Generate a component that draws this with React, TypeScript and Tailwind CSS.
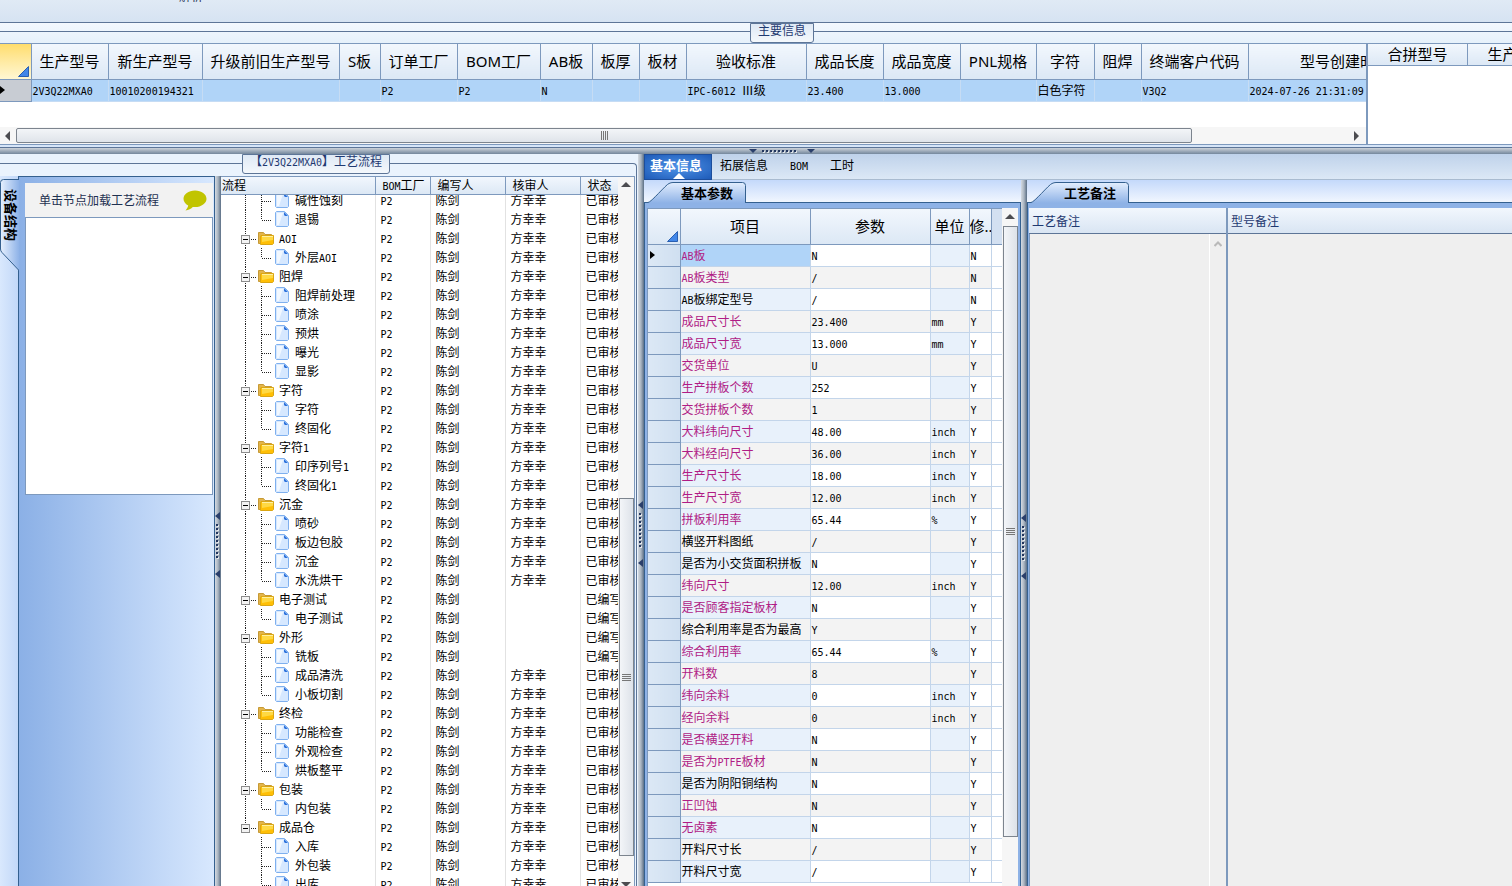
import { Fragment, useState } from 'react';

const SONG = 'font-["Noto_Sans_CJK_SC",sans-serif] text-xs';
const YAHEI = 'font-["Noto_Sans","Noto_Sans_CJK_SC",sans-serif] text-[15px] font-normal';

const mainColumns = [
  { title: '生产型号', width: 77, value: '2V3Q22MXA0' },
  { title: '新生产型号', width: 94, value: '10010200194321' },
  { title: '升级前旧生产型号', width: 137, value: '' },
  { title: 'S板', width: 41, value: '' },
  { title: '订单工厂', width: 77, value: 'P2' },
  { title: 'BOM工厂', width: 83, value: 'P2' },
  { title: 'AB板', width: 52, value: 'N' },
  { title: '板厚', width: 47, value: '' },
  { title: '板材', width: 47, value: '' },
  { title: '验收标准', width: 120, value: 'IPC-6012 Ⅲ级' },
  { title: '成品长度', width: 77, value: '23.400' },
  { title: '成品宽度', width: 77, value: '13.000' },
  { title: 'PNL规格', width: 76, value: '' },
  { title: '字符', width: 58, value: '白色字符' },
  { title: '阻焊', width: 47, value: '' },
  { title: '终端客户代码', width: 107, value: 'V3Q2' },
  { title: '型号创建时间', width: 194, value: '2024-07-26 21:31:09' },
];

type Group = { name: string; hidden?: boolean; written?: boolean; items: { name: string; written?: boolean }[] };

const groups: Group[] = [
  { name: '外层蚀刻', hidden: true, items: [{ name: '碱性蚀刻' }, { name: '退锡' }] },
  { name: 'AOI', items: [{ name: '外层AOI' }] },
  {
    name: '阻焊',
    items: [{ name: '阻焊前处理' }, { name: '喷涂' }, { name: '预烘' }, { name: '曝光' }, { name: '显影' }],
  },
  { name: '字符', items: [{ name: '字符' }, { name: '终固化' }] },
  { name: '字符1', items: [{ name: '印序列号1' }, { name: '终固化1' }] },
  { name: '沉金', items: [{ name: '喷砂' }, { name: '板边包胶' }, { name: '沉金' }, { name: '水洗烘干' }] },
  { name: '电子测试', written: true, items: [{ name: '电子测试', written: true }] },
  {
    name: '外形',
    written: true,
    items: [{ name: '铣板', written: true }, { name: '成品清洗' }, { name: '小板切割' }],
  },
  { name: '终检', items: [{ name: '功能检查' }, { name: '外观检查' }, { name: '烘板整平' }] },
  { name: '包装', items: [{ name: '内包装' }] },
  { name: '成品仓', items: [{ name: '入库' }, { name: '外包装' }, { name: '出库' }] },
];

// name, value, unit, editable, highlighted
const params: [string, string, string, string, boolean][] = [
  ['AB板', 'N', '', 'N', true],
  ['AB板类型', '/', '', 'N', true],
  ['AB板绑定型号', '/', '', 'N', false],
  ['成品尺寸长', '23.400', 'mm', 'Y', true],
  ['成品尺寸宽', '13.000', 'mm', 'Y', true],
  ['交货单位', 'U', '', 'Y', true],
  ['生产拼板个数', '252', '', 'Y', true],
  ['交货拼板个数', '1', '', 'Y', true],
  ['大料纬向尺寸', '48.00', 'inch', 'Y', true],
  ['大料经向尺寸', '36.00', 'inch', 'Y', true],
  ['生产尺寸长', '18.00', 'inch', 'Y', true],
  ['生产尺寸宽', '12.00', 'inch', 'Y', true],
  ['拼板利用率', '65.44', '%', 'Y', true],
  ['横竖开料图纸', '/', '', 'Y', false],
  ['是否为小交货面积拼板', 'N', '', 'Y', false],
  ['纬向尺寸', '12.00', 'inch', 'Y', true],
  ['是否顾客指定板材', 'N', '', 'Y', true],
  ['综合利用率是否为最高', 'Y', '', 'Y', false],
  ['综合利用率', '65.44', '%', 'Y', true],
  ['开料数', '8', '', 'Y', true],
  ['纬向余料', '0', 'inch', 'Y', true],
  ['经向余料', '0', 'inch', 'Y', true],
  ['是否横竖开料', 'N', '', 'Y', true],
  ['是否为PTFE板材', 'N', '', 'Y', true],
  ['是否为阴阳铜结构', 'N', '', 'Y', false],
  ['正凹蚀', 'N', '', 'Y', true],
  ['无卤素', 'N', '', 'Y', true],
  ['开料尺寸长', '/', '', 'Y', false],
  ['开料尺寸宽', '/', '', 'Y', false],
];

// Latin runs take a half-width monospaced face beside the full-width characters
function Text({ children }: { children: string }) {
  return (
    <>
      {children.split(/([\x20-\x7e]+)/).map((part, i) =>
        i % 2 ? (
          <span key={i} className='font-["DejaVu_Sans_Mono",monospace] text-[10px] leading-none'>{part}</span>
        ) : (
          <Fragment key={i}>{part}</Fragment>
        )
      )}
    </>
  );
}

function Corner() {
  return (
    <svg width="11" height="11" className="mb-[2px] ml-auto mr-[2px] block">
      <path d="M10.5 0.5V10.5H0.5Z" fill="#4287e8" stroke="#2a5fb0" />
    </svg>
  );
}

function RowMarker() {
  return (
    <svg width="5" height="8" className="block">
      <path d="M0 0L5 4L0 8Z" fill="#000" />
    </svg>
  );
}

function Arrow({ dir }: { dir: 'up' | 'down' | 'left' | 'right' }) {
  const d = {
    up: 'M0 7L5 2L10 7Z',
    down: 'M0 2L5 7L10 2Z',
    left: 'M7 0L2 5L7 10Z',
    right: 'M3 0L8 5L3 10Z',
  }[dir];
  return (
    <svg width="10" height="10" className="block shrink-0">
      <path d={d} fill="#4c4c50" />
    </svg>
  );
}

function VerticalGrip() {
  return (
    <svg width="6" height="66" viewBox="0 0 6 66" className="block">
      <path d="M5 0V8L0 4ZM5 58V66L0 62Z" fill="#2a3f6b" />
      <path d="M3 13V48" stroke="#fff" strokeOpacity="0.7" strokeWidth="2" strokeDasharray="2 2" />
      <path d="M2 12V47" stroke="#22365f" strokeWidth="2" strokeDasharray="2 2" />
    </svg>
  );
}

function Splitter() {
  return (
    <div className="flex w-[6px] shrink-0 items-center overflow-hidden bg-linear-to-r from-[#d5dbe2] via-[#a9b4c0] to-[#5b6f86]">
      <VerticalGrip />
    </div>
  );
}

function VerticalThumb({ className }: { className: string }) {
  return (
    <div className={`flex flex-col items-center justify-center gap-px border border-[#7c848e] bg-linear-to-r from-[#f3f5f8] to-[#dde2e9] ${className}`}>
      <span className="h-px w-[9px] bg-[#777]" />
      <span className="h-px w-[9px] bg-[#777]" />
      <span className="h-px w-[9px] bg-[#777]" />
      <span className="h-px w-[9px] bg-[#777]" />
    </div>
  );
}

function FolderIcon() {
  return (
    <svg width="16" height="14" viewBox="0 0 16 14" className="block shrink-0">
      <path d="M0.5 12.5V1.5H5.5L7 3.5H13.5V12.5Z" fill="#e3b54a" stroke="#c79a35" />
      <path d="M3 4.500H15.500V12.500L14.500 13.500H2.500V6Z" fill="#ffbf05" stroke="#dba613" />
      <path d="M4 5.500H15" stroke="#fff0a0" />
      <path d="M4 6H15V9L4 11Z" fill="#ffd943" />
    </svg>
  );
}

function FileIcon() {
  return (
    <svg width="14" height="16" viewBox="0 0 14 16" className="block shrink-0">
      <path d="M1.5 0.5H9.5L13.5 4.5V14.5L12.5 15.5H1.5L0.5 14.5V1.5Z" fill="#d6e8ff" stroke="#7fb0ee" />
      <path d="M2 2H8L4 14H2Z" fill="#f2f8ff" />
      <path d="M9 1L13 5H10L9 4Z" fill="#2e73dc" />
    </svg>
  );
}

function CommentIcon() {
  return (
    <svg width="24" height="21" viewBox="0 0 24 21" className="block">
      <path d="M12 0.5C5.5 0.5 0.5 4.3 0.5 8.8C0.5 11.6 2.3 14 5.2 15.5C5 17.3 3.8 19 2.5 20.4C5.5 20.2 8.3 18.7 9.8 17C10.5 17.1 11.3 17.1 12 17.1C18.5 17.1 23.5 13.3 23.5 8.8C23.5 4.3 18.5 0.5 12 0.5Z" fill="#c1c400" />
    </svg>
  );
}

function Caption({ children }: { children: string }) {
  return (
    <span className={`${SONG} relative block h-[20px] rounded-b-[3px] border border-[#5d7597] bg-linear-to-b from-[#dfe9f5] to-[#f4f8fc] px-[7px] leading-[12px] text-[#1f3970]`}>
      <Text>{children}</Text>
    </span>
  );
}

function SlantTab({ children }: { children: string }) {
  return (
    <div className="flex h-[23px] shrink-0 items-end border-b border-[#34608f] bg-linear-to-b from-[#c4d9fb] to-[#f1f6fe] pl-1">
      <button
        type="button"
        className='relative -mb-px h-[21px] w-[98px] pl-[33px] text-left font-["Noto_Sans_CJK_SC",sans-serif] text-[13px] leading-[18px] font-bold text-black'
      >
        <svg width="98" height="21" viewBox="0 0 98 21" className="absolute inset-0">
          <defs>
            <linearGradient id="slant" x1="0" y1="0" x2="0" y2="1">
              <stop offset="0" stopColor="#e3eefe" />
              <stop offset="1" stopColor="#8eb2e6" />
            </linearGradient>
          </defs>
          <path d="M0 20.5C3 20.5 18 2.5 21 1.5Q23 0.5 25 0.5H94.5Q97.5 0.5 97.5 3.5V21H0Z" fill="url(#slant)" />
          <path d="M0 20.5C3 20.5 18 2.5 21 1.5Q23 0.5 25 0.5H94.5Q97.5 0.5 97.5 3.5V21" fill="none" stroke="#34608f" />
        </svg>
        <span className="relative">{children}</span>
      </button>
    </div>
  );
}

function MainInfo() {
  return (
    <section className="shrink-0">
      <div className="relative flex h-[20px] justify-center bg-linear-to-b from-[#f3f8fe] to-[#e6f1fb]">
        <span className="absolute inset-x-0 top-[8px] h-px bg-[#5d7597]" />
        <Caption>主要信息</Caption>
      </div>
      <div className="flex h-[102px] border-y border-[#7d99bd] bg-white">
        <div className="flex min-w-0 flex-1 flex-col overflow-hidden">
          <table className="w-[1442px] shrink-0 table-fixed border-collapse">
            <colgroup>
              <col className="w-[31px]" />
              {mainColumns.map((c) => (
                <col key={c.title} style={{ width: c.width }} />
              ))}
            </colgroup>
            <thead>
              <tr className="h-[35px]">
                <th className="border-r border-b border-[#7d99bd] bg-linear-to-b from-[#ffdd6b] to-[#fff7d2] p-0 align-bottom">
                  <Corner />
                </th>
                {mainColumns.map((c) => (
                  <th key={c.title} className={`${YAHEI} border-r border-b border-[#7d99bd] bg-linear-to-b from-[#f2f7fd] to-[#dce8f5] p-0 leading-[20px] whitespace-nowrap`}>
                    {c.title}
                  </th>
                ))}
              </tr>
            </thead>
            <tbody>
              <tr className="h-[22px] bg-[#b0d4f8]">
                <td className="border-r border-b border-[#7d99bd] bg-[#c8ccd3] p-0">
                  <RowMarker />
                </td>
                {mainColumns.map((c) => (
                  <td key={c.title} className={`${SONG} border-r border-b border-[#c6dcf4] p-0 pl-px leading-[16px] whitespace-nowrap`}>
                    <Text>{c.value}</Text>
                  </td>
                ))}
              </tr>
            </tbody>
          </table>
          <div className="mt-auto flex h-[17px] items-center bg-[#f6f6f6] pl-[3px]">
            <Arrow dir="left" />
            <div className="ml-[3px] flex h-[15px] w-[1176px] items-center justify-center gap-px rounded-xs border border-[#7c848e] bg-linear-to-b from-[#f3f5f8] to-[#dfe4ea]">
              <span className="h-[9px] w-px bg-[#777]" />
              <span className="h-[9px] w-px bg-[#777]" />
              <span className="h-[9px] w-px bg-[#777]" />
              <span className="h-[9px] w-px bg-[#777]" />
            </div>
            <span className="mr-[5px] ml-auto">
              <Arrow dir="right" />
            </span>
          </div>
        </div>
        <div className="w-[198px] shrink-0 overflow-hidden border-l-2 border-[#7d99bd]">
          <table className="w-[200px] table-fixed border-collapse">
            <thead>
              <tr className="h-[21px]">
                {['合拼型号', '生产型号'].map((t) => (
                  <th key={t} className={`${YAHEI} border-r border-b border-[#7d99bd] bg-linear-to-b from-[#f2f7fd] to-[#dce8f5] p-0 leading-[20px]`}>
                    {t}
                  </th>
                ))}
              </tr>
            </thead>
          </table>
        </div>
      </div>
    </section>
  );
}

function DevicePanel() {
  return (
    <div className="flex w-[215px] shrink-0">
      <div className="w-[18px] shrink-0 bg-linear-to-r from-[#d9e8fd] to-[#c2d8f8] pt-[3px]">
        <button type="button" className='relative block h-[92px] w-[19px] font-["Noto_Sans_CJK_SC",sans-serif] text-[13px] font-bold text-black'>
          <svg width="19" height="92" viewBox="0 0 19 92" className="absolute inset-0">
            <defs>
              <linearGradient id="side">
                <stop offset="0" stopColor="#e6f0fe" />
                <stop offset="1" stopColor="#8fb3e8" />
              </linearGradient>
            </defs>
            <path d="M19 0.5H3.5Q0.5 0.5 0.5 3.5V70Q0.5 72 2 73.5L19 91.5Z" fill="url(#side)" />
            <path d="M19 0.5H3.5Q0.5 0.5 0.5 3.5V70Q0.5 72 2 73.5L19 91.5" fill="none" stroke="#34608f" />
          </svg>
          <span className="absolute top-[10px] left-0 leading-[22px] [text-orientation:sideways] [writing-mode:vertical-rl]">设备结构</span>
        </button>
      </div>
      <div className="min-w-0 flex-1 border-x border-t border-[#34608f] bg-linear-to-r from-[#8bb0e6] to-[#d8e8fe] px-[6px] pt-[6px] pr-px">
        <div className="flex h-[34px] items-center justify-between bg-[#f2f2f2] pr-[6px] pl-[14px]">
          <span className={`${SONG} text-[#1f3151]`}>单击节点加载工艺流程</span>
          <CommentIcon />
        </div>
        <div className="h-[278px] border border-[#7d99bd] bg-white" />
      </div>
    </div>
  );
}

function GroupLines({ open, last, onToggle }: { open: boolean; last: boolean; onToggle: () => void }) {
  return (
    <button type="button" onClick={onToggle} aria-label={open ? '折叠' : '展开'} className="ml-[20px] block shrink-0">
      <svg width="17" height="19" viewBox="0 0 17 19" className="block">
        <path d={last ? 'M4.5 0V9' : 'M4.5 0V19'} stroke="#222" strokeDasharray="1 1" />
        <path d="M10 10.5H15" stroke="#222" strokeDasharray="1 1" />
        <rect x="0.5" y="6.5" width="8" height="8" fill="#f3f3f3" stroke="#8c8c8c" />
        <path d={open ? 'M2 10.5H7' : 'M2 10.5H7M4.5 8V13'} stroke="#000" />
      </svg>
    </button>
  );
}

function ItemLines({ lastGroup, lastItem }: { lastGroup: boolean; lastItem: boolean }) {
  return (
    <svg width="34" height="19" viewBox="0 0 34 19" className="ml-[20px] block shrink-0">
      {!lastGroup && <path d="M4.5 0V19" stroke="#222" strokeDasharray="1 1" />}
      <path d={lastItem ? 'M20.5 0V10' : 'M20.5 0V19'} stroke="#222" strokeDasharray="1 1" />
      <path d="M21 10.5H31" stroke="#222" strokeDasharray="1 1" />
    </svg>
  );
}

function StateCells({ written, reviewer }: { written?: boolean; reviewer: string }) {
  const cell = 'border-l border-[#e2e2e2] p-0 pl-[5px] leading-[16px] whitespace-nowrap';
  return (
    <>
      <td className={cell}><Text>P2</Text></td>
      <td className={cell}>陈剑</td>
      <td className={cell}>{reviewer}</td>
      <td className={`${cell} overflow-hidden`}>{written ? '已编写' : '已审核'}</td>
    </>
  );
}

function FlowTree() {
  const [closed, setClosed] = useState<string[]>([]);

  const toggle = (name: string) =>
    setClosed(closed.includes(name) ? closed.filter((n) => n !== name) : [...closed, name]);

  const cols = (
    <colgroup>
      <col />
      <col className="w-[55px]" />
      <col className="w-[75px]" />
      <col className="w-[75px]" />
      <col className="w-[38px]" />
    </colgroup>
  );

  return (
    <div className="flex min-w-0 flex-1 border-t border-r border-[#7d99bd] bg-white">
      <div className={`${SONG} flex min-w-0 flex-1 flex-col overflow-hidden text-black`}>
        <table className="w-full shrink-0 table-fixed border-collapse">
          {cols}
          <thead>
            <tr className="h-[17px] bg-linear-to-b from-[#f2f7fd] to-[#dce8f5]">
              <th className="border-b border-[#7d99bd] p-0 pl-px text-left leading-[14px] font-normal">流程</th>
              {['BOM工厂', '编写人', '核审人', '状态'].map((t) => (
                <th key={t} className="border-b border-l border-[#7d99bd] p-0 pl-[7px] text-left leading-[14px] font-normal whitespace-nowrap">
                  <Text>{t}</Text>
                </th>
              ))}
            </tr>
          </thead>
        </table>
        <div className="min-h-0 flex-1 overflow-hidden">
          <table className="-mt-1 w-full table-fixed border-collapse">
            {cols}
            <tbody>
              {groups.map((g, gi) => {
                const lastGroup = gi === groups.length - 1;
                return (
                  <Fragment key={g.name}>
                    {!g.hidden && (
                      <tr className="h-[19px]">
                        <td className="p-0">
                          <div className="flex h-[19px] items-center">
                            <GroupLines open={!closed.includes(g.name)} last={lastGroup} onToggle={() => toggle(g.name)} />
                            <FolderIcon />
                            <span className="ml-[5px] leading-[16px] whitespace-nowrap"><Text>{g.name}</Text></span>
                          </div>
                        </td>
                        <StateCells written={g.written} reviewer={g.written ? '' : '方幸幸'} />
                      </tr>
                    )}
                    {!closed.includes(g.name) &&
                      g.items.map((item, i) => (
                        <tr key={item.name} className="h-[19px]">
                          <td className="p-0">
                            <div className="flex h-[19px] items-center">
                              <ItemLines lastGroup={lastGroup} lastItem={i === g.items.length - 1} />
                              <FileIcon />
                              <span className="ml-[6px] leading-[16px] whitespace-nowrap"><Text>{item.name}</Text></span>
                            </div>
                          </td>
                          <StateCells written={item.written} reviewer={item.written ? '' : '方幸幸'} />
                        </tr>
                      ))}
                  </Fragment>
                );
              })}
            </tbody>
          </table>
        </div>
      </div>
      <div className="mb-[24px] flex w-[16px] shrink-0 flex-col items-center bg-[#f6f6f6] pt-[3px]">
        <Arrow dir="up" />
        <VerticalThumb className="mt-auto h-[358px] w-[15px]" />
        <span className="mt-[24px]">
          <Arrow dir="down" />
        </span>
      </div>
    </div>
  );
}

function ParamGrid() {
  const line = 'border-r border-b border-[#c3d5ea]';
  return (
    <div className="flex min-h-0 flex-1 overflow-hidden border-x border-[#34608f] bg-[#8eb2e6] px-[2px] pt-[5px]">
      <div className="min-w-0 flex-1 overflow-hidden border-t border-l border-[#7d99bd] bg-white">
        <table className="w-full table-fixed border-collapse">
          <colgroup>
            <col className="w-[32px]" />
            <col className="w-[130px]" />
            <col className="w-[120px]" />
            <col className="w-[39px]" />
            <col className="w-[22px]" />
            <col />
          </colgroup>
          <thead>
            <tr className={`${YAHEI} h-[35px] bg-linear-to-b from-[#f2f7fd] to-[#dce8f5]`}>
              <th className="border-r border-b border-[#7d99bd] p-0 align-bottom"><Corner /></th>
              {['项目', '参数', '单位'].map((t) => (
                <th key={t} className="border-r border-b border-[#7d99bd] p-0 font-normal whitespace-nowrap">{t}</th>
              ))}
              <th className="overflow-hidden border-r border-b border-[#7d99bd] p-0 font-normal whitespace-nowrap">修..</th>
              <th className="border-b border-[#7d99bd] bg-[#d3e0f1] p-0" />
            </tr>
          </thead>
          <tbody className={SONG}>
            {params.map(([name, value, unit, edit, marked], i) => {
              const odd = i % 2 === 1;
              return (
                <tr key={name} className={odd ? 'h-[22px] bg-[#f3f3f3]' : 'h-[22px] bg-white'}>
                  <td className="border-r border-b border-[#7d99bd] bg-linear-to-r from-[#dce8f5] to-[#cfdff0] p-0 pl-[2px]">
                    {i === 0 && <RowMarker />}
                  </td>
                  <td className={`${line} p-0 pl-px leading-[16px] whitespace-nowrap ${i === 0 ? 'bg-[#b0d4f8]' : odd ? '' : 'bg-[#e8f1fb]'} ${marked ? 'text-[#b01c85]' : 'text-black'}`}>
                    <Text>{name}</Text>
                  </td>
                  <td className={`${line} p-0 pl-px leading-[16px]`}><Text>{value}</Text></td>
                  <td className={`${line} p-0 pl-px leading-[16px] ${odd ? '' : 'bg-[#e8f1fb]'}`}><Text>{unit}</Text></td>
                  <td className={`${line} p-0 pl-px leading-[16px]`}><Text>{edit}</Text></td>
                  <td className="border-b border-[#c3d5ea] bg-white p-0" />
                </tr>
              );
            })}
          </tbody>
        </table>
      </div>
      <div className="flex w-[16px] shrink-0 flex-col items-center bg-[#f6f6f6] pt-1">
        <Arrow dir="up" />
        <VerticalThumb className="mt-1 h-[611px] w-[15px]" />
      </div>
    </div>
  );
}

function Remarks() {
  const label = `${SONG} flex h-[26px] items-center border-b border-[#5d7597] bg-linear-to-b from-[#f2f7fd] to-[#d9e5f3] pl-[3px] text-[#1f3970]`;
  return (
    <div className="flex min-h-0 flex-1 border-l border-[#34608f] bg-[#8eb2e6] pt-[5px] pl-px">
      <div className="flex w-[199px] shrink-0 flex-col border-r-2 border-[#7d99bd]">
        <label htmlFor="flow-remark" className={label}>工艺备注</label>
        <div className="flex flex-1 border-l border-[#7d99bd] bg-[#efefef]">
          <textarea id="flow-remark" readOnly className="block min-w-0 flex-1 resize-none bg-[#efefef] outline-none" />
          <div className="w-[17px] shrink-0 border-l border-white pt-[7px] pl-1">
            <svg width="8" height="6" className="block">
              <path d="M0.5 5L4 1.5L7.5 5" fill="none" stroke="#b9b9b9" strokeWidth="2" />
            </svg>
          </div>
        </div>
      </div>
      <div className="flex min-w-0 flex-1 flex-col">
        <label htmlFor="model-remark" className={label}>型号备注</label>
        <textarea id="model-remark" readOnly className="block flex-1 resize-none bg-[#efefef] outline-none" />
      </div>
    </div>
  );
}

function DetailTabs() {
  const [tab, setTab] = useState('基本信息');

  return (
    <nav className="flex h-[26px] shrink-0 border-b border-[#a9bbd0] bg-linear-to-b from-[#bfd2ea] to-[#dce8f6]">
      {['基本信息', '拓展信息', 'BOM', '工时'].map((t) => (
        <button
          key={t}
          type="button"
          onClick={() => setTab(t)}
          className={
            tab === t
              ? 'relative h-[26px] border border-[#1d4e9c] bg-radial from-[#4f93e8] to-[#1e5bb8] pr-[9px] pb-1 pl-[5px] font-["Noto_Sans_CJK_SC",sans-serif] text-[13px] leading-[20px] font-bold text-white'
              : `${SONG} h-[25px] px-2 pb-1 leading-[20px] text-black nth-[3]:ml-[6px] nth-[4]:ml-[6px]`
          }
        >
          <Text>{t}</Text>
          {tab === t && (
            <svg width="12" height="6" className="absolute bottom-0 left-[28px]">
              <path d="M0 6L6 0L12 6Z" fill="#fff" />
            </svg>
          )}
        </button>
      ))}
    </nav>
  );
}

export default function App() {
  return (
    <div className="h-screen overflow-hidden bg-[#e9f2fc]">
      {/* the window runs a little past the right and bottom edges */}
      <main className="-mr-13 flex h-[calc(100vh+28px)] flex-col">
        <header className={`${SONG} h-[23px] shrink-0 overflow-hidden border-b border-[#5d7597] bg-linear-to-b from-[#e0eaf5] to-[#d6e3f2] pl-[179px]`}>
          <span className="-mt-[11px] block leading-[14px] text-[#1f3151]">解析</span>
        </header>

        <MainInfo />

        <div className="h-[3px] shrink-0 border-b border-[#5d7597] bg-[#d6e5f8]" />
        <div className="flex h-[6px] shrink-0 justify-center bg-linear-to-b from-[#cdd3da] to-[#74879c]">
          <svg width="66" height="6" viewBox="0 0 66 6" className="block">
            <path d="M0 1H8L4 5ZM58 1H66L62 5Z" fill="#2a3f6b" />
            <path d="M14 4H49" stroke="#fff" strokeOpacity="0.7" strokeWidth="2" strokeDasharray="2 2" />
            <path d="M13 3H48" stroke="#22365f" strokeWidth="2" strokeDasharray="2 2" />
          </svg>
        </div>

        <div className="flex min-h-0 flex-1">
          <section className="flex w-[638px] shrink-0 flex-col bg-[#eaf3fd]">
            <div className="relative flex h-[22px] shrink-0 justify-center pr-[6px]">
              <span className="absolute top-[9px] right-px left-0 h-[13px] rounded-tr-[4px] border-t border-r border-[#5d7597]" />
              <Caption>【2V3Q22MXA0】工艺流程</Caption>
            </div>
            <div className="mr-px flex min-h-0 flex-1 border-r border-[#5d7597] pr-px">
              <DevicePanel />
              <Splitter />
              <FlowTree />
            </div>
          </section>

          <Splitter />

          <section className="flex min-w-0 flex-1 flex-col">
            <DetailTabs />
            <div className="flex min-h-0 flex-1">
              <div className="flex w-[377px] shrink-0 flex-col">
                <SlantTab>基本参数</SlantTab>
                <ParamGrid />
              </div>
              <Splitter />
              <div className="flex min-w-0 flex-1 flex-col">
                <SlantTab>工艺备注</SlantTab>
                <Remarks />
              </div>
            </div>
          </section>
        </div>
      </main>
    </div>
  );
}
